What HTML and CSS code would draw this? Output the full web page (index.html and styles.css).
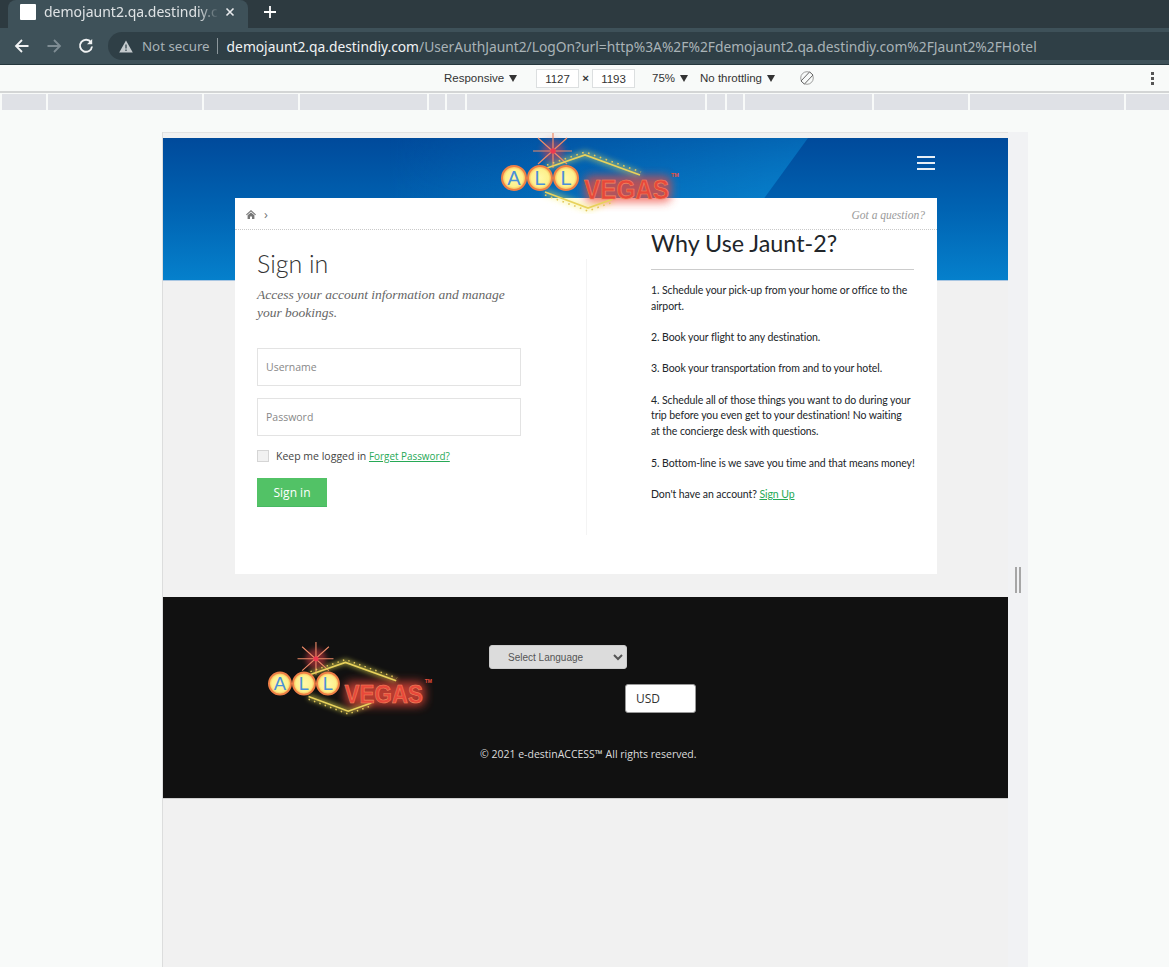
FILE: index.html
```html
<!DOCTYPE html>
<html>
<head>
<meta charset="utf-8">
<title>demojaunt2.qa.destindiy.com</title>
<link rel="stylesheet" href="styles.css">
</head>
<body>

<svg class="defs" width="0" height="0">
  <defs>
    <radialGradient id="ballfill">
      <stop offset="0" stop-color="#fff9a8"/>
      <stop offset="0.72" stop-color="#fdf08c"/>
      <stop offset="1" stop-color="#f7b04e"/>
    </radialGradient>
    <filter id="glow" x="-40%" y="-40%" width="180%" height="180%">
      <feGaussianBlur stdDeviation="3"/>
    </filter>
    <filter id="glowbig" x="-40%" y="-60%" width="180%" height="220%">
      <feGaussianBlur stdDeviation="5"/>
    </filter>
    <symbol id="logo" viewBox="0 0 180 82">
      <!-- glow -->
      <path d="M46 35 L84 22 L139 43 M44 60 L87 76 L112 67" fill="none" stroke="#f6ee5a" stroke-width="5" opacity="0.6" filter="url(#glow)"/>
      <rect x="84" y="44" width="86" height="26" rx="6" fill="#f04a3a" opacity="0.75" filter="url(#glowbig)"/>
      <circle cx="52" cy="19" r="11" fill="#e8404a" opacity="0.5" filter="url(#glow)"/>
      <!-- star -->
      <path d="M52 1 V36 M32 19 H71 M37 6 L66 32 M66 6 L37 32" stroke="#ee8a68" stroke-width="1.2"/>
      <circle cx="52" cy="19" r="2.8" fill="#ee3a50"/>
      <!-- sign outline -->
      <path d="M46 36 L84 23 L139 43" fill="none" stroke="#e8d25c" stroke-width="1.7"/>
      <path d="M44 60 L87 76 L112 67" fill="none" stroke="#e8d25c" stroke-width="1.7"/>
      <path d="M46 33 L84 20 L140 40" fill="none" stroke="#e3c75a" stroke-width="1.6" stroke-dasharray="1.6 4.6"/>
      <path d="M44 63 L87 79 L112 70" fill="none" stroke="#e3c75a" stroke-width="1.6" stroke-dasharray="1.6 4.6"/>
      <!-- balls -->
      <circle cx="13" cy="46" r="12" fill="url(#ballfill)" stroke="#ee7f46" stroke-width="2"/>
      <circle cx="39" cy="46" r="12" fill="url(#ballfill)" stroke="#ee7f46" stroke-width="2"/>
      <circle cx="65" cy="46" r="12" fill="url(#ballfill)" stroke="#ee7f46" stroke-width="2"/>
      <text class="logo-ball" x="13" y="53" text-anchor="middle">A</text>
      <text class="logo-ball" x="39" y="53" text-anchor="middle">L</text>
      <text class="logo-ball" x="65" y="53" text-anchor="middle">L</text>
      <text class="logo-word" x="83" y="67" textLength="85" lengthAdjust="spacingAndGlyphs">VEGAS</text>
      <text class="logo-tm" x="170" y="45">TM</text>
    </symbol>
  </defs>
</svg>

<div class="tabbar">
  <div class="tab">
    <span class="favicon"></span>
    <span class="tab-title">demojaunt2.qa.destindiy.c</span>
    <svg class="tab-close" width="10" height="10" viewBox="0 0 10 10"><path d="M1.5 1.5 L8.5 8.5 M8.5 1.5 L1.5 8.5" stroke="#e8eaed" stroke-width="1.6"/></svg>
  </div>
  <svg class="tab-new" width="12" height="12" viewBox="0 0 12 12"><path d="M6 0 V12 M0 6 H12" stroke="#fff" stroke-width="1.8"/></svg>
</div>

<div class="toolbar">
  <svg class="nav" width="16" height="16" viewBox="0 0 16 16"><path d="M14.5 8 H2 M8 2 L2 8 L8 14" fill="none" stroke="#f1f3f4" stroke-width="1.8"/></svg>
  <svg class="nav" width="16" height="16" viewBox="0 0 16 16"><path d="M1.5 8 H14 M8 2 L14 8 L8 14" fill="none" stroke="#7f8d94" stroke-width="1.8"/></svg>
  <svg class="nav" width="16" height="16" viewBox="0 0 16 16"><path d="M13 4.4 A6 6 0 1 0 14 8.5" fill="none" stroke="#f1f3f4" stroke-width="1.9"/><path d="M14.2 1 V6.2 H9 Z" fill="#f1f3f4"/></svg>
  <div class="omnibox">
    <svg width="14" height="13" viewBox="0 0 14 13"><path d="M7 0.5 L13.8 12.5 H0.2 Z" fill="#c4cacd"/><path d="M7 4.5 V8.6 M7 9.6 V11" stroke="#36474f" stroke-width="1.3"/></svg>
    <span class="not-secure">Not secure</span>
    <span class="omni-sep"></span>
    <span class="url"><b>demojaunt2.qa.destindiy.com</b>/UserAuthJaunt2/LogOn?url=http%3A%2F%2Fdemojaunt2.qa.destindiy.com%2FJaunt2%2FHotel</span>
  </div>
</div>

<div class="devbar">
  <span class="dev-item dev-responsive">Responsive <i class="caret"></i></span>
  <span class="dev-num">1127</span>
  <span class="dev-x">×</span>
  <span class="dev-num">1193</span>
  <span class="dev-item dev-zoom">75% <i class="caret"></i></span>
  <span class="dev-item dev-throttle">No throttling <i class="caret"></i></span>
  <svg class="dev-rotate" width="14" height="14" viewBox="0 0 14 14"><circle cx="7" cy="7" r="6.3" fill="none" stroke="#888" stroke-width="0.8"/><path d="M9.6 0.9 L13 4 L4.4 13.1 L1 10 Z" fill="#f8faf9" stroke="#666" stroke-width="1"/></svg>
  <span class="dev-more"><i></i><i></i><i></i></span>
</div>

<div class="ruler">
  <i class="w44"></i><i class="w154"></i><i class="w94"></i><i class="w127"></i><i class="w16"></i><i class="w18"></i><i class="w238"></i><i class="w18"></i><i class="w16"></i><i class="w127"></i><i class="w94"></i><i class="w154"></i><i class="w44"></i>
</div>

<div class="stage">
  <div class="device">
    <div class="page">
      <div class="hero">
        <div class="hero-shine"></div>
        <svg class="logo logo-top"><use href="#logo"/></svg>
        <div class="burger"><i></i><i></i><i></i></div>
      </div>

      <div class="content">
        <div class="crumbs">
          <span class="crumb-left">
            <svg width="10" height="9" viewBox="0 0 10 9"><path d="M5 0 L10 4.6 L9.2 5.2 L5 1.6 L0.8 5.2 L0 4.6 Z M1.6 5.3 L5 2.4 L8.4 5.3 V9 H6 V6.4 H4 V9 H1.6 Z" fill="#777"/></svg>
            <span class="crumb-arrow">›</span>
          </span>
          <span class="crumb-q">Got a question?</span>
        </div>
        <div class="cols">
          <div class="col-left">
            <h1>Sign in</h1>
            <p class="lead">Access your account information and manage your bookings.</p>
            <div class="field">Username</div>
            <div class="field">Password</div>
            <div class="keep"><span class="check"></span>Keep me logged in <a href="#">Forget Password?</a></div>
            <button class="btn-signin">Sign in</button>
          </div>
          <div class="col-right">
            <h2>Why Use Jaunt-2?</h2>
            <p>1. Schedule your pick-up from your home or office to the airport.</p>
            <p>2. Book your flight to any destination.</p>
            <p>3. Book your transportation from and to your hotel.</p>
            <p>4. Schedule all of those things you want to do during your trip before you even get to your destination! No waiting<br>at the concierge desk with questions.</p>
            <p>5. Bottom-line is we save you time and that means money!</p>
            <p>Don't have an account? <a href="#">Sign Up</a></p>
          </div>
        </div>
      </div>

      <div class="footer">
        <svg class="logo logo-foot"><use href="#logo"/></svg>
        <div class="foot-mid">
          <select class="lang"><option>Select Language</option></select>
          <div class="usd">USD</div>
          <p class="copy">© 2021 e-destinACCESS™ All rights reserved.</p>
        </div>
      </div>
    </div>
    <div class="handle"><i></i><i></i></div>
  </div>
</div>

</body>
</html>
```

FILE: styles.css
```css
html, body {
	margin: 0;
	padding: 0;
	height: 967px;
	overflow: hidden;
	background: #f8faf9;
	font-family: "Open Sans", sans-serif;
}
.defs { position: absolute; }

/* browser chrome */
.tabbar {
	height: 28px;
	background: #2d3a40;
	display: flex;
	align-items: center;
}
.tab {
	margin-left: 8px;
	width: 240px;
	height: 28px;
	background: #3e5159;
	border-radius: 8px 8px 0 0;
	display: flex;
	align-items: center;
	box-sizing: border-box;
	padding: 0 0 5px 12px;
}
.favicon {
	width: 16px;
	height: 16px;
	background: #fff;
	border-radius: 1px;
}
.tab-title {
	margin-left: 8px;
	width: 175px;
	overflow: hidden;
	white-space: nowrap;
	font-family: "Noto Sans", sans-serif;
	font-size: 14px;
	color: #dfe3e5;
	-webkit-mask-image: linear-gradient(to right, #000 88%, transparent 100%);
	mask-image: linear-gradient(to right, #000 88%, transparent 100%);
}
.tab-close { margin-left: 6px; }
.tab-new { margin-left: 16px; margin-top: -5px; }

.toolbar {
	height: 36px;
	background: #3e5159;
	border-bottom: 1px solid #24363c;
	display: flex;
	align-items: center;
	padding-left: 14px;
}
.nav { margin-right: 16px; flex: none; }
.nav:nth-child(3) { margin-right: 14px; }
.omnibox {
	flex: 1;
	height: 28px;
	background: #2f3f46;
	border-radius: 14px 0 0 14px;
	display: flex;
	align-items: center;
	padding-left: 11px;
	font-family: "Noto Sans", sans-serif;
	font-size: 13.8px;
	white-space: nowrap;
	overflow: hidden;
}
.not-secure { margin-left: 9px; color: #a9b3b7; font-size: 13.3px; }
.omni-sep { width: 1px; height: 16px; background: #8c979c; margin: 0 9px 0 7px; }
.url { color: #a9b3b7; }
.url b { font-weight: normal; color: #f1f3f4; }

/* device toolbar */
.devbar {
	height: 26px;
	background: #f8faf9;
	border-bottom: 2px solid #d3d5d5;
	display: flex;
	align-items: center;
	font-family: "Liberation Sans", sans-serif;
	font-size: 11.5px;
	color: #333;
}
.dev-item { white-space: nowrap; }
.dev-responsive { margin-left: 444px; width: 92px; }
.dev-num {
	width: 43px;
	height: 19px;
	line-height: 19px;
	box-sizing: border-box;
	border: 1px solid #dcdfe0;
	background: #fff;
	text-align: center;
}
.dev-x { width: 13px; text-align: center; font-weight: bold; }
.dev-zoom { margin-left: 17px; width: 48px; }
.dev-throttle { width: 100px; }
.caret {
	display: inline-block;
	width: 0;
	height: 0;
	margin-left: 2px;
	border: 4px solid transparent;
	border-top: 7px solid #333;
	border-bottom: 0;
}
.dev-more {
	margin-left: auto;
	margin-right: 15px;
	display: flex;
	flex-direction: column;
	gap: 2px;
}
.dev-more i { width: 3px; height: 3px; background: #555; }

.ruler {
	height: 16px;
	margin-top: 1px;
	padding-left: 2px;
	display: flex;
	gap: 2px;
	overflow: hidden;
}
.ruler i { height: 16px; background: #dfe1e6; flex: none; }
.w44 { width: 44px; }
.w154 { width: 154px; }
.w94 { width: 94px; }
.w127 { width: 127px; }
.w16 { width: 16px; }
.w18 { width: 18px; }
.w238 { width: 238px; }

/* emulated device */
.stage { height: 857px; overflow: hidden; }
.device {
	position: relative;
	margin: 22px 0 0 162px;
	width: 866px;
	height: 835px;
	border-left: 1px solid #dcdddd;
	background: #f1f2f4;
	box-sizing: border-box;
}
.page {
	width: 845px;
	height: 100%;
	box-sizing: border-box;
	padding-top: 5px;
	border-top: 1px solid #e2e2e2;
	background: #f1f1f1;
}
.handle {
	position: absolute;
	left: 852px;
	top: 435px;
	display: flex;
	gap: 2px;
}
.handle i {
	width: 2px;
	height: 26px;
	background: #a6a6a6;
}

.hero {
	position: relative;
	height: 143px;
	background: linear-gradient(to bottom, #004a9b 0%, #0063b2 50%, #0580cc 100%);
	border-bottom: 1px solid #a9c6e2;
	box-sizing: border-box;
}
.hero-shine {
	height: 100%;
	width: 645px;
	background: linear-gradient(to right, rgba(8, 130, 205, 0) 35%, rgba(8, 130, 205, 0.95) 100%);
	clip-path: polygon(0 0, 100% 0, 84% 100%, 0 100%);
	-webkit-mask-image: linear-gradient(to bottom, rgba(0, 0, 0, 0.55), #000 45%);
	mask-image: linear-gradient(to bottom, rgba(0, 0, 0, 0.55), #000 45%);
}
.logo { position: absolute; }
.logo-top { left: 338px; top: -6px; width: 180px; height: 82px; z-index: 2; }
.burger {
	position: absolute;
	left: 754px;
	top: 18px;
	width: 18px;
	display: flex;
	flex-direction: column;
	gap: 4px;
}
.burger i { height: 2px; background: rgba(255, 255, 255, 0.9); }
.logo-ball {
	font-family: "Liberation Sans", sans-serif;
	font-size: 20px;
	fill: #4a90d8;
}
.logo-word {
	font-family: "Liberation Sans", sans-serif;
	font-size: 27px;
	font-weight: bold;
	fill: #e8483a;
	stroke: #f28a60;
	stroke-width: 0.6px;
}
.logo-tm {
	font-family: "Liberation Sans", sans-serif;
	font-size: 5.5px;
	font-weight: bold;
	fill: #e9503f;
}

/* white card */
.content {
	position: relative;
	z-index: 1;
	width: 702px;
	height: 376px;
	margin: -83px 0 0 72px;
	background: #fff;
}
.crumbs {
	height: 32px;
	box-sizing: border-box;
	border-bottom: 1px dotted #c9c9c9;
	display: flex;
	justify-content: space-between;
	align-items: center;
	padding: 2px 12px 0 11px;
}
.crumb-left { display: flex; align-items: center; gap: 8px; }
.crumb-arrow { font-size: 13px; line-height: 9px; color: #777; }
.crumb-q {
	font-family: "Liberation Serif", serif;
	font-style: italic;
	font-size: 11.5px;
	color: #9a9a9a;
}
.cols { display: flex; margin-top: -1px; }
.col-left {
	width: 329px;
	margin: 30px 0 0 22px;
	border-right: 1px solid #f4f4f4;
	height: 276px;
}
h1 {
	margin: -11px 0 0;
	font-family: Lato, sans-serif;
	font-weight: 300;
	font-size: 25px;
	line-height: 30px;
	color: #333;
}
.lead {
	margin: 8px 0 26px;
	width: 270px;
	font-family: "Liberation Serif", serif;
	font-style: italic;
	font-size: 13.5px;
	line-height: 18px;
	color: #666;
}
.field {
	width: 264px;
	height: 38px;
	line-height: 37px;
	box-sizing: border-box;
	border: 1px solid #e3e3e3;
	padding-left: 8px;
	font-size: 10.5px;
	color: #888;
	margin-bottom: 12px;
}
.keep {
	display: flex;
	align-items: center;
	height: 16px;
	font-size: 10.5px;
	color: #444;
	white-space: pre;
}
.check {
	width: 10px;
	height: 10px;
	margin-right: 7px;
	border: 1px solid #d5d5d5;
	background: #f1f1f1;
}
.keep a { color: #27a956; font-size: 9.9px; }
.col-right a { color: #27a956; }
.btn-signin {
	display: block;
	margin-top: 14px;
	width: 70px;
	height: 29px;
	padding: 0;
	border: 0;
	border-bottom: 1px solid #47b863;
	background: #52c266;
	color: #fff;
	font-family: "Open Sans", sans-serif;
	font-size: 12px;
}
.col-right { margin-left: 64px; width: 263px; }
h2 {
	margin: 0 0 13px;
	padding-bottom: 11px;
	border-bottom: 1px solid #ccc;
	font-family: Lato, sans-serif;
	font-weight: 400;
	font-size: 23.3px;
	line-height: 29px;
	color: #212529;
}
.col-right p {
	margin: 0 -4px 15.5px 0;
	font-family: Lato, sans-serif;
	font-size: 10.5px;
	letter-spacing: -0.08px;
	line-height: 15.8px;
	color: #212529;
}

/* footer */
.footer {
	height: 201px;
	margin-top: 23px;
	background: #111;
	border-bottom: 1px solid #cfcfcf;
	display: flex;
	position: relative;
}
.logo-foot { left: 105px; top: 44px; width: 166px; height: 76px; }
.foot-mid {
	margin-left: 326px;
	padding-top: 48px;
	width: 207px;
}
.lang {
	display: block;
	width: 138px;
	height: 24px;
	border: 1px solid #ccc;
	border-radius: 3px;
	background: #dcdcdc;
	color: #555;
	font-family: "Liberation Sans", sans-serif;
	font-size: 10px;
	padding-left: 14px;
}
.usd {
	margin: 15px 0 0 136px;
	width: 71px;
	height: 29px;
	line-height: 28px;
	box-sizing: border-box;
	border: 1px solid #999;
	border-radius: 3px;
	background: #fff;
	padding-left: 10px;
	font-size: 12px;
	color: #333;
}
.copy {
	margin: 34px 0 0 -9px;
	white-space: nowrap;
	font-size: 10.5px;
	line-height: 14px;
	color: #ddd;
}
```
